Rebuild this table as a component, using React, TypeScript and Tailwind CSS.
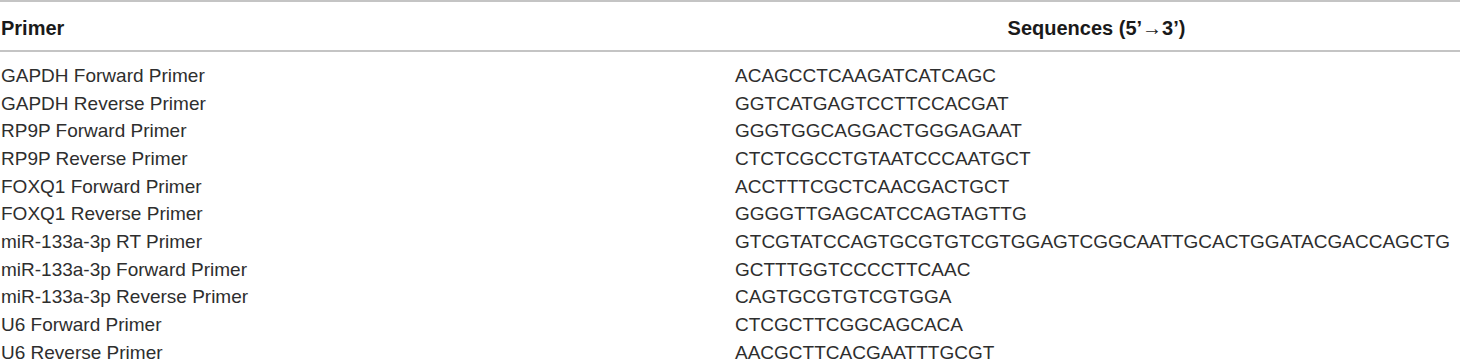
const rows: [string, string][] = [
  ["GAPDH Forward Primer", "ACAGCCTCAAGATCATCAGC"],
  ["GAPDH Reverse Primer", "GGTCATGAGTCCTTCCACGAT"],
  ["RP9P Forward Primer", "GGGTGGCAGGACTGGGAGAAT"],
  ["RP9P Reverse Primer", "CTCTCGCCTGTAATCCCAATGCT"],
  ["FOXQ1 Forward Primer", "ACCTTTCGCTCAACGACTGCT"],
  ["FOXQ1 Reverse Primer", "GGGGTTGAGCATCCAGTAGTTG"],
  [
    "miR-133a-3p RT Primer",
    "GTCGTATCCAGTGCGTGTCGTGGAGTCGGCAATTGCACTGGATACGACCAGCTG",
  ],
  ["miR-133a-3p Forward Primer", "GCTTTGGTCCCCTTCAAC"],
  ["miR-133a-3p Reverse Primer", "CAGTGCGTGTCGTGGA"],
  ["U6 Forward Primer", "CTCGCTTCGGCAGCACA"],
  ["U6 Reverse Primer", "AACGCTTCACGAATTTGCGT"],
];

export default function App() {
  return (
    <div className="w-[1460px] h-[359px] overflow-hidden bg-white font-['Liberation_Sans',Arial,sans-serif]">
      <div className="grid grid-cols-[733px_1fr] h-[52px] items-center pt-[3px] border-y-2 border-[#c4c4c4] text-[20px] font-bold text-[#1a1a1a]">
        <div className="pl-[1px]">Primer</div>
        <div className="text-center">Sequences (5’→3’)</div>
      </div>
      <div className="pt-[10px] text-[19px] leading-[27.67px] text-[#2e2e2e]">
        {rows.map(([name, seq]) => (
          <div key={name} className="grid grid-cols-[733px_1fr]">
            <div className="pl-[1px] whitespace-nowrap">{name}</div>
            <div className="pl-[2px] whitespace-nowrap">{seq}</div>
          </div>
        ))}
      </div>
    </div>
  );
}
